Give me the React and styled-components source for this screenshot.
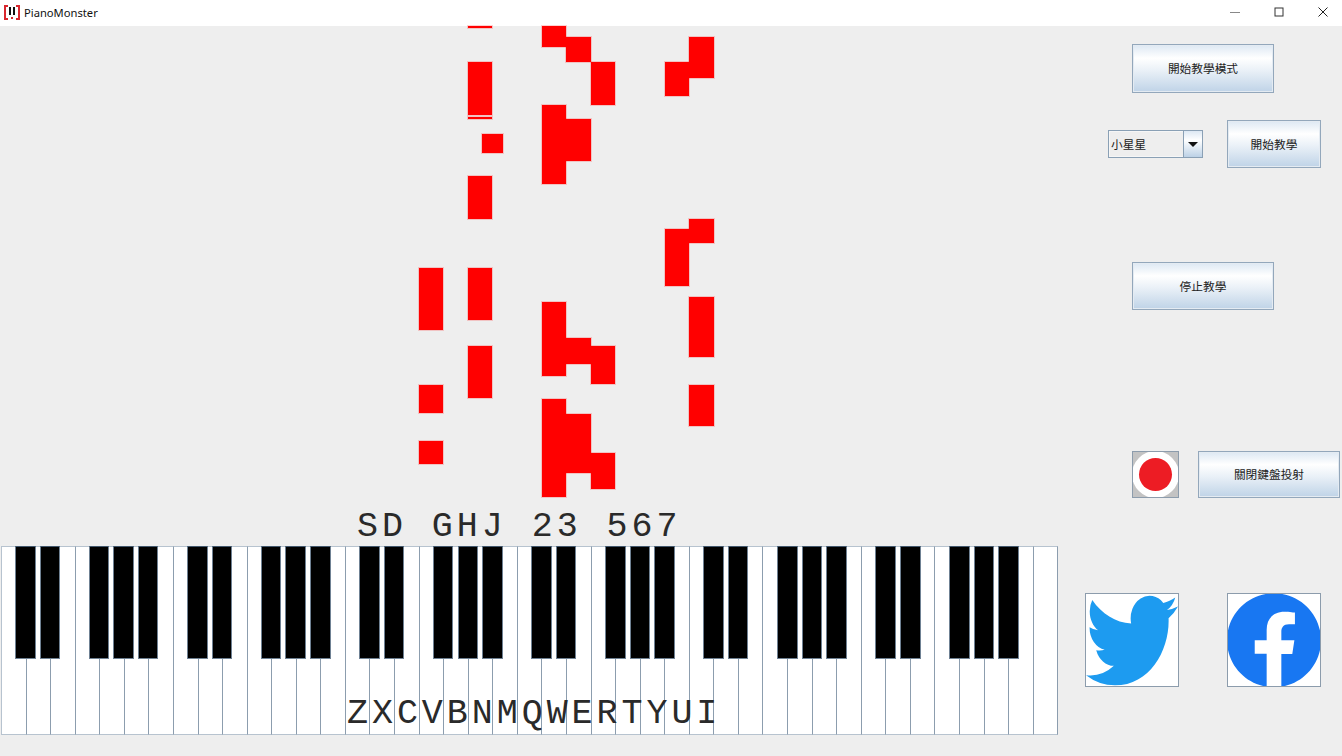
import React from 'react';
import styled, { createGlobalStyle } from 'styled-components';

const GlobalStyle = createGlobalStyle`
  html, body {
    margin: 0;
    padding: 0;
    background: #eeeeee;
    overflow: hidden;
  }
`;

const Window = styled.div`
  display: flex;
  flex-direction: column;
  width: 1342px;
  height: 756px;
  background: #eeeeee;
  overflow: hidden;
`;

const TitleBar = styled.div`
  display: flex;
  align-items: center;
  flex: 0 0 26px;
  height: 26px;
  padding-left: 4px;
  padding-bottom: 2px;
  box-sizing: border-box;
  background: #ffffff;
`;

const AppName = styled.span`
  margin-left: 4px;
  font: 11.2px 'Noto Sans', sans-serif;
  color: #111111;
`;

const WindowControls = styled.div`
  display: flex;
  margin-left: auto;
  margin-right: -3px;
`;

const WindowControl = styled.div`
  display: flex;
  align-items: center;
  justify-content: center;
  width: 44px;
  height: 24px;
`;

const Body = styled.div`
  display: flex;
  flex: 1;
  min-height: 0;
`;

const PianoColumn = styled.div`
  display: flex;
  flex-direction: column;
  flex: 0 0 1058px;
`;

const Stage = styled.div`
  position: relative;
  display: flex;
  align-items: flex-end;
  flex: 0 0 520px;
  padding-left: 357px;
  box-sizing: border-box;
`;

const Note = styled.div`
  position: absolute;
  left: ${p => p.$x}px;
  top: ${p => p.$y - 26}px;
  width: ${p => p.$w}px;
  height: ${p => p.$h}px;
  background: #ff0000;
  box-shadow: 0 0 0 1px rgba(255, 0, 0, 0.18);
`;

const BlackHints = styled.div`
  font-family: 'Liberation Mono', monospace;
  font-size: 35px;
  line-height: 35px;
  letter-spacing: 3.95px;
  color: #2a2a2a;
  white-space: pre;
  margin-bottom: 1px;
`;

const Keyboard = styled.div`
  position: relative;
  display: flex;
  height: 189px;
  margin-left: 1px;
  width: 1057px;
`;

const WhiteKey = styled.div`
  flex: 1;
  box-sizing: border-box;
  background: #ffffff;
  border: 1px solid #b7c3cf;
  border-left: none;
  border-right-color: #8c9dae;
  &:first-child {
    border-left: 1px solid #b7c3cf;
  }
`;

const BlackKey = styled.div`
  position: absolute;
  top: 0;
  left: ${p => (p.$slot * 100) / 43}%;
  width: 20.5px;
  height: 113px;
  margin-left: -10.5px;
  box-sizing: border-box;
  background: #000000;
  border: 1px solid #6f8193;
  border-top-color: #41566b;
`;

const WhiteHints = styled.div`
  position: absolute;
  left: 346px;
  bottom: 3px;
  font-family: 'Liberation Mono', monospace;
  font-size: 35px;
  line-height: 35px;
  letter-spacing: 3.95px;
  color: #2a2a2a;
  white-space: pre;
`;

const Panel = styled.div`
  display: flex;
  flex-direction: column;
  flex: 1;
`;

const Row = styled.div`
  display: flex;
  align-items: center;
  margin-top: ${p => p.$top}px;
  margin-left: ${p => p.$left}px;
  gap: ${p => p.$gap || 0}px;
`;

const SwingButton = styled.button`
  width: ${p => p.$w}px;
  height: ${p => p.$h}px;
  padding: 0 0 2px;
  box-sizing: border-box;
  border: 1px solid #93a7bb;
  box-shadow: inset 0 0 0 1px #e4ebf2;
  background: linear-gradient(to bottom, #dde8f3 0%, #ffffff 28%, #e9f0f7 55%, #bfd3e7 100%);
  font: 11.7px 'Noto Sans CJK TC', sans-serif;
  color: #222222;
`;

const Combo = styled.div`
  display: flex;
  width: 95px;
  height: 28px;
  box-sizing: border-box;
  border: 1px solid #8aa0b5;
  background: #eeeeee;
`;

const ComboValue = styled.div`
  flex: 1;
  display: flex;
  align-items: center;
  padding: 0 0 2px 1px;
  border: 1px solid #f6f6f6;
  border-right: none;
  font: 11.7px 'Noto Sans CJK TC', sans-serif;
  color: #222222;
`;

const ComboArrow = styled.div`
  display: flex;
  align-items: center;
  justify-content: center;
  width: 18px;
  border-left: 1px solid #8aa0b5;
  background: linear-gradient(to bottom, #dde8f3 0%, #ffffff 35%, #bcd1e6 100%);
  &::after {
    content: '';
    border-left: 5px solid transparent;
    border-right: 5px solid transparent;
    border-top: 5px solid #111111;
  }
`;

const IconFrame = styled.div`
  display: flex;
  align-items: center;
  justify-content: center;
  width: ${p => p.$size}px;
  height: ${p => p.$size}px;
  box-sizing: border-box;
  border: 1px solid #8c9cac;
  background: ${p => p.$bg};
  overflow: hidden;
  svg {
    display: block;
    flex: none;
  }
`;

const notes = [
  [468, 26, 24, 1.5],
  [468, 62, 24, 52.5],
  [468, 116.5, 24, 2],
  [482, 134, 21, 19],
  [468, 175.5, 24, 43],
  [542, 26, 24, 20.5],
  [566, 37, 25, 24.5],
  [591, 62, 24, 43],
  [542, 105, 24, 79],
  [566, 119, 25, 42],
  [689, 37, 25, 41],
  [665, 62, 24, 34],
  [689, 219, 25, 24],
  [665, 229, 24, 57],
  [419, 268, 24, 62],
  [419, 385, 24, 28],
  [419, 440.5, 24, 23.5],
  [468, 268, 24, 52],
  [468, 346, 24, 52],
  [542, 302, 24, 74],
  [566, 338, 25, 26],
  [591, 346, 24, 38],
  [542, 398.5, 24, 98],
  [566, 414, 25, 59],
  [591, 453, 24, 36],
  [689, 296.5, 25, 60],
  [689, 385, 25, 41]
];

const blackSlots = [
  1, 2, 4, 5, 6, 8, 9, 11, 12, 13, 15, 16, 18, 19, 20, 22, 23, 25, 26, 27, 29, 30, 32, 33, 34,
  36, 37, 39, 40, 41
];

const whiteKeys = Array.from({ length: 43 }, (_, i) => i);

function AppIcon() {
  return (
    <svg width="16" height="15" viewBox="0 0 16 15">
      <path d="M4 1H1v13h3M12 1h3v13h-3" fill="none" stroke="#d9272e" strokeWidth="2" />
      <rect x="5" y="2" width="2" height="8" fill="#111" />
      <rect x="9" y="2" width="2" height="8" fill="#111" />
      <rect x="7" y="12" width="2" height="2" fill="#d9272e" />
    </svg>
  );
}

function TwitterLogo() {
  return (
    <svg width="92" height="92" viewBox="0 1.85 24 20.05" preserveAspectRatio="none">
      <path
        fill="#1d9bf0"
        d="M23.953 4.57a10 10 0 01-2.825.775 4.958 4.958 0 002.163-2.723c-.951.555-2.005.959-3.127 1.184a4.92 4.92 0 00-8.384 4.482C7.69 8.095 4.067 6.13 1.64 3.162a4.822 4.822 0 00-.666 2.475c0 1.71.87 3.213 2.188 4.096a4.904 4.904 0 01-2.228-.616v.06a4.923 4.923 0 003.946 4.827 4.996 4.996 0 01-2.212.085 4.936 4.936 0 004.604 3.417 9.867 9.867 0 01-6.102 2.105c-.39 0-.779-.023-1.17-.067a13.995 13.995 0 007.557 2.209c9.053 0 13.998-7.496 13.998-13.985 0-.21 0-.42-.015-.63A9.935 9.935 0 0024 4.59z"
      />
    </svg>
  );
}

function FacebookLogo() {
  return (
    <svg width="94" height="94" viewBox="0 0 24 24">
      <path
        fill="#1877f2"
        d="M24 12.073c0-6.627-5.373-12-12-12s-12 5.373-12 12c0 5.99 4.388 10.954 10.125 11.854v-8.385H7.078v-3.47h3.047V9.43c0-3.007 1.792-4.669 4.533-4.669 1.312 0 2.686.235 2.686.235v2.953H15.83c-1.491 0-1.956.925-1.956 1.874v2.25h3.328l-.532 3.47h-2.796v8.385C19.612 23.027 24 18.062 24 12.073z"
      />
    </svg>
  );
}

export default function App() {
  return (
    <Window>
      <GlobalStyle />
      <TitleBar>
        <AppIcon />
        <AppName>PianoMonster</AppName>
        <WindowControls>
          <WindowControl>
            <svg width="10" height="10" viewBox="0 0 10 10">
              <path d="M0 5.5h10" stroke="#888" strokeWidth="1" />
            </svg>
          </WindowControl>
          <WindowControl>
            <svg width="10" height="10" viewBox="0 0 10 10">
              <rect x="1" y="1" width="8" height="8" fill="none" stroke="#333" strokeWidth="1" />
            </svg>
          </WindowControl>
          <WindowControl>
            <svg width="10" height="10" viewBox="0 0 10 10">
              <path d="M0.5 0.5l9 9M9.5 0.5l-9 9" stroke="#222" strokeWidth="1" />
            </svg>
          </WindowControl>
        </WindowControls>
      </TitleBar>
      <Body>
        <PianoColumn>
          <Stage>
            {notes.map(([x, y, w, h]) => (
              <Note key={`${x}-${y}`} $x={x} $y={y} $w={w} $h={h} />
            ))}
            <BlackHints>SD GHJ 23 567</BlackHints>
          </Stage>
          <Keyboard>
            {whiteKeys.map(i => (
              <WhiteKey key={i} />
            ))}
            {blackSlots.map(slot => (
              <BlackKey key={slot} $slot={slot} />
            ))}
            <WhiteHints>ZXCVBNMQWERTYUI</WhiteHints>
          </Keyboard>
        </PianoColumn>
        <Panel>
          <Row $top={18} $left={74}>
            <SwingButton $w={142} $h={49}>開始教學模式</SwingButton>
          </Row>
          <Row $top={27} $left={50} $gap={24}>
            <Combo>
              <ComboValue>小星星</ComboValue>
              <ComboArrow />
            </Combo>
            <SwingButton $w={94} $h={48}>開始教學</SwingButton>
          </Row>
          <Row $top={94} $left={74}>
            <SwingButton $w={142} $h={48}>停止教學</SwingButton>
          </Row>
          <Row $top={141} $left={74} $gap={19}>
            <IconFrame $size={47} $bg="#c3c3c3">
              <svg width="45" height="45" viewBox="0 0 45 45">
                <circle cx="22.5" cy="22.5" r="23.5" fill="#ffffff" />
                <circle cx="22.5" cy="22.5" r="16.5" fill="#ed1c24" />
              </svg>
            </IconFrame>
            <SwingButton $w={142} $h={47}>關閉鍵盤投射</SwingButton>
          </Row>
          <Row $top={95} $left={27} $gap={48}>
            <IconFrame $size={94} $bg="#ffffff">
              <TwitterLogo />
            </IconFrame>
            <IconFrame $size={94} $bg="#ffffff">
              <FacebookLogo />
            </IconFrame>
          </Row>
        </Panel>
      </Body>
    </Window>
  );
}
